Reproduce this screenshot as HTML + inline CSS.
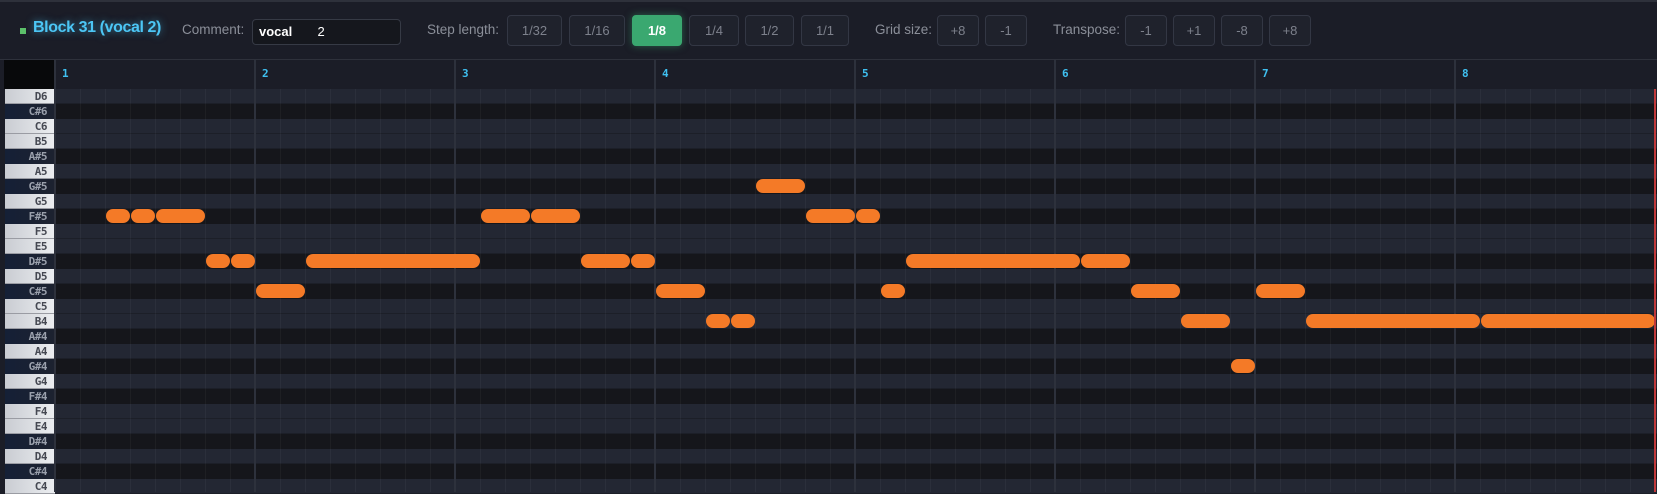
<!DOCTYPE html>
<html><head><meta charset="utf-8"><style>
*{margin:0;padding:0;box-sizing:border-box}
body{width:1657px;height:492px;background:#1b1d27;overflow:hidden;font-family:"Liberation Sans",sans-serif;position:relative}
.a{position:absolute}
.btn{position:absolute;top:15px;height:31px;border:1px solid #333744;border-radius:4px;background:#1f222c;color:#7d818c;font-size:13px;text-align:center;line-height:29px}
.lbl{position:absolute;top:22px;color:#8b8f99;font-size:13.5px}
.key{position:absolute;left:5px;width:50px;height:15px;font-size:11px;font-weight:bold;text-align:right;padding-right:8px;line-height:15px;font-family:"DejaVu Sans Mono","Liberation Mono",monospace;letter-spacing:-0.5px}
.w{background:linear-gradient(90deg,#c9ccd2,#eceef1);color:#454852;border-bottom:1px solid #9a9ca3}
.b{background:linear-gradient(90deg,#152036,#1d2230);color:#9aa0ac}
.row{position:absolute;left:55px;width:1602px;height:15px}
.rw{background:#232733;border-bottom:1px solid #1c1f28}
.rb{background:#15161b}
.n{position:absolute;height:14px;background:#f47a27;border-radius:7px}
.vl{position:absolute;top:89px;width:1px;height:403px;background:rgba(255,255,255,0.04)}
.bl{position:absolute;top:60px;width:2px;height:432px;background:#2d313c}
.num{position:absolute;top:67px;color:#3fc0f0;font-size:11px;font-weight:bold;font-family:"DejaVu Sans Mono",monospace}
</style></head><body>
<div class="a" style="left:0;top:0;width:1657px;height:2px;background:#2e313b"></div>
<div class="a" style="left:20px;top:28px;width:6px;height:6px;background:#5cc06a"></div>
<div class="a" style="left:33px;top:19px;color:#4cc6f5;font-size:16px;font-weight:bold;text-shadow:0 0 8px rgba(76,198,245,0.6);letter-spacing:-0.4px">Block 31 (vocal 2)</div>
<div class="lbl" style="left:182px">Comment:</div>
<div class="a" style="left:252px;top:19px;width:149px;height:26px;border:1px solid #363a45;border-radius:4px;background:#15171d;color:#fff;font-size:13px;padding-left:6px;line-height:24px;white-space:pre"><b>vocal</b>       2</div>
<div class="lbl" style="left:427px">Step length:</div>
<div class="btn" style="left:507px;width:55px">1/32</div>
<div class="btn" style="left:569px;width:56px">1/16</div>
<div class="btn" style="left:632px;width:50px;background:#3aa870;border-color:#3aa870;color:#fff;font-weight:bold;box-shadow:0 0 8px rgba(58,168,112,0.5)">1/8</div>
<div class="btn" style="left:689px;width:50px">1/4</div>
<div class="btn" style="left:745px;width:49px">1/2</div>
<div class="btn" style="left:801px;width:48px">1/1</div>
<div class="lbl" style="left:875px">Grid size:</div>
<div class="btn" style="left:937px;width:42px">+8</div>
<div class="btn" style="left:985px;width:42px">-1</div>
<div class="lbl" style="left:1053px">Transpose:</div>
<div class="btn" style="left:1125px;width:42px">-1</div>
<div class="btn" style="left:1173px;width:42px">+1</div>
<div class="btn" style="left:1221px;width:42px">-8</div>
<div class="btn" style="left:1269px;width:42px">+8</div>
<div class="a" style="left:0;top:59px;width:1657px;height:1px;background:#2e313b"></div>
<div class="a" style="left:4px;top:60px;width:51px;height:29px;background:#08090b"></div>
<div id="g"></div>
<div class="a" style="left:1654px;top:89px;width:2px;height:403px;background:#c0393b"></div>
<script>
var names=["D6","C#6","C6","B5","A#5","A5","G#5","G5","F#5","F5","E5","D#5","D5","C#5","C5","B4","A#4","A4","G#4","G4","F#4","F4","E4","D#4","D4","C#4","C4"];
var h="";
names.forEach(function(n,i){var y=89+i*15,bk=n.indexOf("#")>=0;
h+='<div class="row '+(bk?'rb':'rw')+'" style="top:'+y+'px"></div>';
h+='<div class="key '+(bk?'b':'w')+'" style="top:'+y+'px">'+n+'</div>';});
for(var s=0;s<64;s++){if(s%8)h+='<div class="vl" style="left:'+(55+s*25)+'px"></div>';}
for(var b=0;b<8;b++){h+='<div class="bl" style="left:'+(54+b*200)+'px"></div><div class="num" style="left:'+(62+b*200)+'px">'+(b+1)+'</div>';}
var notes=[[8,2,1],[8,3,1],[8,4,2],[11,6,1],[11,7,1],[11,10,7],[13,8,2],[8,17,2],[8,19,2],[11,21,2],[11,23,1],[13,24,2],[15,26,1],[15,27,1],[6,28,2],[8,30,2],[8,32,1],[13,33,1],[11,34,7],[11,41,2],[13,43,2],[15,45,2],[18,47,1],[13,48,2],[15,50,7],[15,57,7]];
notes.forEach(function(n){h+='<div class="n" style="top:'+(89+n[0]*15)+'px;left:'+(56+n[1]*25)+'px;width:'+(n[2]*25-1)+'px"></div>';});
document.getElementById("g").innerHTML=h;
</script>
</body></html>
